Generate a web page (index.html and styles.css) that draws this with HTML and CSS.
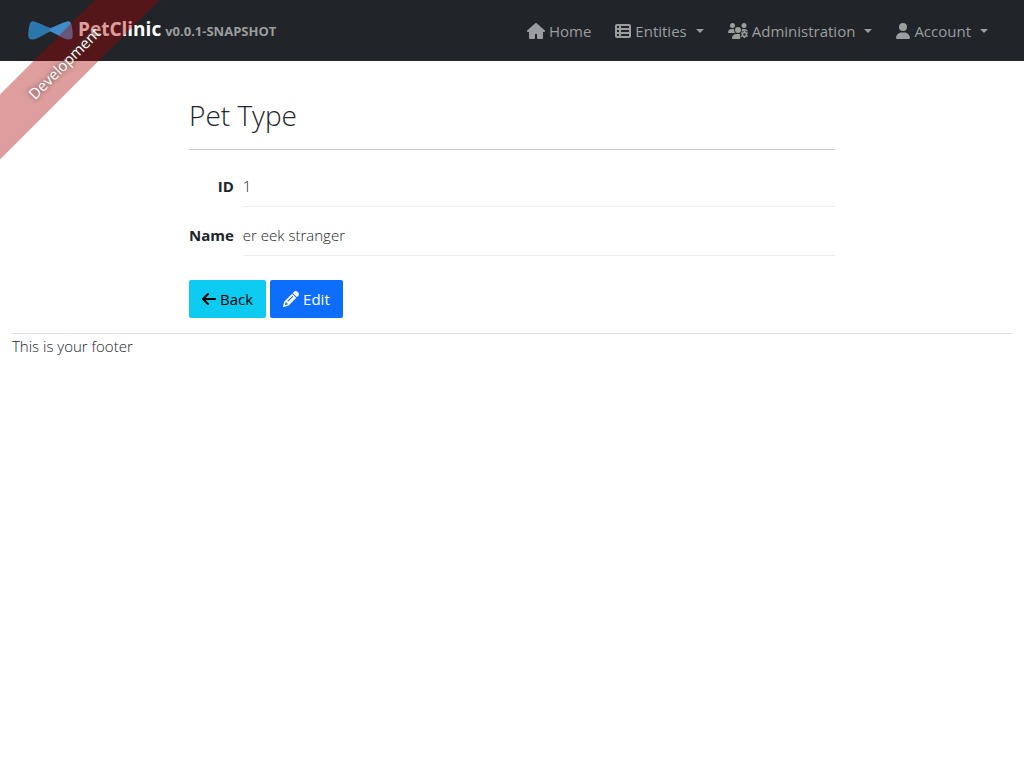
FILE: index.html
```html
<!DOCTYPE html>
<html lang="en">
<head>
<meta charset="utf-8">
<meta name="viewport" content="width=device-width, initial-scale=1">
<title>PetClinic</title>
<link rel="stylesheet" href="styles.css">
</head>
<body>
<div class="ribbon"><a href="#">Development</a></div>
<nav class="navbar">
  <a class="brand" href="#">
    <svg class="logo" viewBox="0 0 45 19" aria-hidden="true">
      <path fill="#2c76ab" d="M22.500 7C16 4.500 11 1.500 6 .4C3.500 0 2.300 .8 1.600 3.500C.8 7 .3 10 .2 14C.2 17.500 2 19 5.500 18.400C12 17 16 13 22.500 10.500Z"/>
      <path fill="#428bca" d="M22.500 7C29 4.500 34 1.500 39 .4C41.500 0 42.700 .8 43.400 3.500C44.200 7 44.700 10 44.800 14C44.800 17.500 43 19 39.500 18.400C33 17 29 13 22.500 10.500C21.500 9.500 21.500 8 22.500 7Z"/>
    </svg>
    <span class="title">PetClinic</span>
    <span class="version">v0.0.1-SNAPSHOT</span>
  </a>
  <ul class="menu">
    <li><a class="link" href="#">
      <svg class="icon wide" viewBox="0 0 576 512" aria-hidden="true"><path d="M575.800 255.500c0 18-15 32.100-32 32.100h-32l.7 160.200c0 2.700-.2 5.400-.5 8.100V472c0 22.100-17.900 40-40 40H360c-22.100 0-40-17.900-40-40V376c0-17.700-14.300-32-32-32s-32 14.300-32 32v96c0 22.100-17.900 40-40 40H104c-22.100 0-40-17.900-40-40V287.600H32c-18 0-32-14-32-32.100 0-9 3-17 10-24L266.400 8c7-7 15-8 22-8s15 2 21 7L564.800 231.500c8 7 12 15 11 24z"/></svg>
      <span>Home</span></a></li>
    <li><button class="link" type="button">
      <svg class="icon" viewBox="0 0 512 512" aria-hidden="true"><path fill-rule="evenodd" d="M64 32h384c35 0 64 29 64 64v320c0 35-29 64-64 64H64c-35 0-64-29-64-64V96c0-35 29-64 64-64zM64 96v64h64V96zM192 96v64h256V96zM64 224v64h64v-64zM192 224v64h256v-64zM64 352v64h64v-64zM192 352v64h256v-64z"/></svg>
      <span>Entities</span><span class="caret"></span></button></li>
    <li><button class="link" type="button">
      <svg class="icon users" viewBox="0 0 640 512" aria-hidden="true"><circle cx="144" cy="80" r="80"/><circle cx="512" cy="80" r="80"/><circle cx="320" cy="224" r="96"/><path d="M0 298.700C0 239.800 47.800 192 106.700 192h42.700c15.900 0 31 3.500 44.600 9.700-9 50 10 91 40.700 118.300H21.300C9.600 320 0 310.400 0 298.700zM446 202c14-7 29-10 45-10h42c48 0 88 30 102 70-16-1-30 6-42 12-10-20-30-26-60-26-40 0-57 10-60 28-16-10-30-10-43 8 9-22 17-50 16-82zM128 485.300C128 411.700 187.700 352 261.300 352h117c7 10 13 23 8 33-16 30 4 48 21 63-15 15-30 35-18 64H154.700c-14.700 0-26.700-11.900-26.700-26.700z"/><path fill-rule="evenodd" d="M501 252c12-4 37-4 49 0l6 36 21 12 34-13c13 13 21 27 27 44l-28 23v27l28 23c-6 17-14 31-27 44l-34-13-21 12-6 36c-12 4-37 4-49 0l-6-36-21-12-34 13c-13-13-21-27-27-44l28-23v-27l-28-23c6-17 14-31 27-44l34 13 21-12zM526 328a40 40 0 1 0 0 80 40 40 0 1 0 0-80z"/></svg>
      <span>Administration</span><span class="caret"></span></button></li>
    <li><button class="link" type="button">
      <svg class="icon narrow" viewBox="0 0 448 512" aria-hidden="true"><path d="M224 256A128 128 0 1 0 224 0a128 128 0 1 0 0 256zm-45.700 48C79.800 304 0 383.800 0 482.300 0 498.700 13.300 512 29.700 512h388.600c16.400 0 29.700-13.300 29.700-29.700C448 383.800 368.200 304 269.700 304z"/></svg>
      <span>Account</span><span class="caret"></span></button></li>
  </ul>
</nav>
<div class="page">
  <main class="details">
    <h1>Pet Type</h1>
    <dl class="fields">
      <dt>ID</dt><dd>1</dd>
      <dt>Name</dt><dd>er eek stranger</dd>
    </dl>
    <div class="actions">
      <button class="btn info" type="button">
        <svg class="icon narrow" viewBox="0 0 448 512" aria-hidden="true"><path d="M9.400 233.400c-12.500 12.500-12.500 32.800 0 45.300l160 160c12.500 12.500 32.800 12.500 45.300 0s12.500-32.800 0-45.300L109.200 288H416c17.700 0 32-14.300 32-32s-14.300-32-32-32H109.300L214.600 118.600c12.500-12.500 12.500-32.800 0-45.300s-32.800-12.500-45.300 0l-160 160z"/></svg>
        <span>Back</span></button>
      <button class="btn primary" type="button">
        <svg class="icon" viewBox="0 0 512 512" aria-hidden="true"><path fill-rule="evenodd" d="M410.300 231l11.300-11.300-33.900-33.900-62.100-62.100-33.900-33.900-11.300 11.300-22.600 22.600L58.600 322.900c-10.400 10.400-18 23.300-22.200 37.400L1 480.700c-2.500 8.400-.2 17.500 6.100 23.700s15.300 8.500 23.700 6.100l120.300-35.400c14.100-4.200 27-11.800 37.400-22.200L387.700 253.700 410.300 231zM160 399.400l-9.100 22.700c-4 3.100-8.500 5.400-13.300 6.900L59.400 452l23-78.100c1.400-4.900 3.800-9.400 6.900-13.300l22.700-9.100v32c0 8.800 7.200 16 16 16zM362.700 18.700L314.300 67.300l33.900 33.900 62.100 62.100 33.900 33.900 48.500-48.500c25-25 25-65.500 0-90.500L453.300 18.700c-25-25-65.500-25-90.500 0zM315.300 190.600l-144 144c-6.200 6.200-16.400 6.200-22.600 0s-6.200-16.400 0-22.600l144-144c6.200-6.200 16.400-6.200 22.600 0s6.200 16.400 0 22.600z"/></svg>
        <span>Edit</span></button>
    </div>
  </main>
  <footer class="footer"><p>This is your footer</p></footer>
</div>
</body>
</html>
```
FILE: styles.css
```css
* { box-sizing: border-box; }

body {
  margin: 0;
  background: #fff;
  color: #212529;
  font: 300 15px/24px "Open Sans", "Noto Sans", sans-serif;
}

a { color: inherit; text-decoration: none; }

button { font: inherit; color: inherit; border: 0; background: none; cursor: pointer; }

.navbar {
  display: flex;
  align-items: center;
  justify-content: space-between;
  min-height: 61px;
  padding: 8px 28px;
  background: #212529;
  color: #9b9d9e;
  font-weight: 400;
}

.brand { display: flex; align-items: center; white-space: nowrap; font-weight: 700; }

.logo { width: 45px; height: 19px; margin-right: 5px; }

.title { margin-right: 4px; padding-bottom: 3px; color: #fff; font-size: 19px; }

.version { font-size: 13px; }

.menu { display: flex; gap: 8px; margin: 0; padding: 0; list-style: none; }

.link { display: flex; align-items: center; gap: 4px; padding: 8px; }

.icon { flex: none; width: 16px; height: 16px; fill: currentColor; }

.wide { width: 18px; }

.users { width: 20px; }

.narrow { width: 14px; }

.caret {
  margin-left: 5px;
  border: 4px solid transparent;
  border-top-color: currentColor;
  border-bottom: 0;
}

.ribbon {
  position: absolute;
  top: 0;
  left: 0;
  width: 160px;
  height: 160px;
  overflow: hidden;
  z-index: 2;
}

.ribbon a {
  position: absolute;
  top: 40px;
  left: -71px;
  width: 270px;
  background: rgba(170, 0, 0, 0.38);
  color: #fff;
  font-size: 15px;
  font-weight: 400;
  line-height: 46px;
  text-align: center;
  text-shadow: 0 0 5px #444;
  transform: rotate(-45deg);
}

.page { padding: 37px 12px 0; }

.details { width: 67%; margin: 0 auto; padding: 0 12px; }

h1 {
  margin: 0 0 24px;
  padding-bottom: 16px;
  border-bottom: 1px solid #c8c9ca;
  font-size: 28px;
  font-weight: 300;
  line-height: 35px;
}

.fields {
  display: grid;
  grid-template-columns: auto 1fr;
  column-gap: 9px;
  row-gap: 16px;
  margin: 0 0 24px;
}

dt { font-weight: 700; text-align: right; }

dd { margin: 0; padding-bottom: 8px; border-bottom: 1px solid #eee; }

.actions { display: flex; gap: 4px; }

.btn {
  display: flex;
  align-items: center;
  gap: 4px;
  padding: 7px 13px;
  border-radius: 2px;
  font-weight: 400;
}

.info { background: #0dcaf0; color: #000; }

.primary { background: #0d6efd; color: #fff; }

.footer { margin-top: 15px; border-top: 1px solid #dedfdf; }

.footer p { margin: 0; }
```
